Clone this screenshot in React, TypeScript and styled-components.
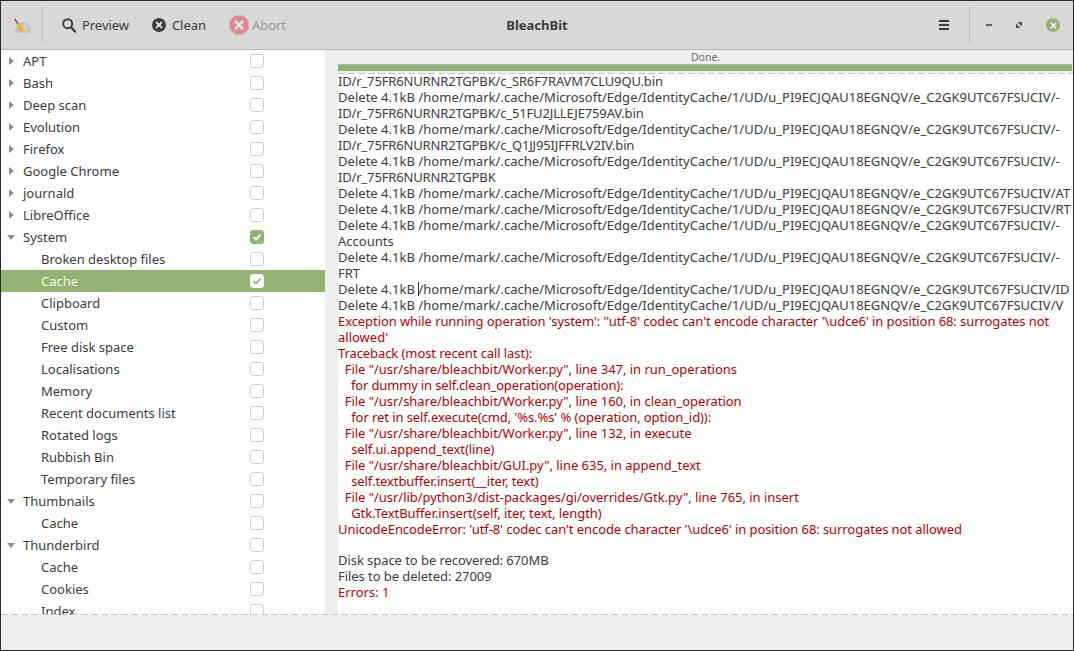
import React from "react";
import styled, { createGlobalStyle, css } from "styled-components";
import { X } from "lucide-react";

const GlobalStyle = createGlobalStyle`
  html, body {
    margin: 0;
    padding: 0;
    background: #efefef;
  }
  body {
    font-family: "Noto Sans", "Open Sans", sans-serif;
    font-size: 13px;
    color: #3c3c3c;
  }
`;

type TreeRow = {
  label: string;
  level: 0 | 1;
  arrow?: "right" | "down";
  checked?: boolean;
  selected?: boolean;
};

const treeRows: TreeRow[] = [
  { label: "APT", level: 0, arrow: "right" },
  { label: "Bash", level: 0, arrow: "right" },
  { label: "Deep scan", level: 0, arrow: "right" },
  { label: "Evolution", level: 0, arrow: "right" },
  { label: "Firefox", level: 0, arrow: "right" },
  { label: "Google Chrome", level: 0, arrow: "right" },
  { label: "journald", level: 0, arrow: "right" },
  { label: "LibreOffice", level: 0, arrow: "right" },
  { label: "System", level: 0, arrow: "down", checked: true },
  { label: "Broken desktop files", level: 1 },
  { label: "Cache", level: 1, checked: true, selected: true },
  { label: "Clipboard", level: 1 },
  { label: "Custom", level: 1 },
  { label: "Free disk space", level: 1 },
  { label: "Localisations", level: 1 },
  { label: "Memory", level: 1 },
  { label: "Recent documents list", level: 1 },
  { label: "Rotated logs", level: 1 },
  { label: "Rubbish Bin", level: 1 },
  { label: "Temporary files", level: 1 },
  { label: "Thumbnails", level: 0, arrow: "down" },
  { label: "Cache", level: 1 },
  { label: "Thunderbird", level: 0, arrow: "down" },
  { label: "Cache", level: 1 },
  { label: "Cookies", level: 1 },
  { label: "Index", level: 1 },
];

const edge = "Delete 4.1kB /home/mark/.cache/Microsoft/Edge/IdentityCache/1/UD/u_PI9ECJQAU18EGNQV/e_C2GK9UTC67FSUCIV/";

type LogEntry = { text: string; error?: boolean; caret?: boolean; track?: number };

const logLines: LogEntry[] = [
  { text: "ID/r_75FR6NURNR2TGPBK/c_SR6F7RAVM7CLU9QU.bin", track: -0.15 },
  { text: edge + "-", track: 0.03 },
  { text: "ID/r_75FR6NURNR2TGPBK/c_51FU2JLLEJE759AV.bin", track: -0.15 },
  { text: edge + "-", track: 0.03 },
  { text: "ID/r_75FR6NURNR2TGPBK/c_Q1JJ95IJFFRLV2IV.bin", track: -0.15 },
  { text: edge + "-", track: 0.03 },
  { text: "ID/r_75FR6NURNR2TGPBK", track: -0.15 },
  { text: edge + "AT", track: 0.03 },
  { text: edge + "RT", track: 0.03 },
  { text: edge + "-", track: 0.03 },
  { text: "Accounts" },
  { text: edge + "-", track: 0.03 },
  { text: "FRT" },
  { text: edge + "ID", caret: true, track: 0.03 },
  { text: edge + "V", track: 0.03 },
  { text: "Exception while running operation 'system': ''utf-8' codec can't encode character '\\udce6' in position 68: surrogates not", error: true, track: -0.08 },
  { text: "allowed'", error: true },
  { text: "Traceback (most recent call last):", error: true, track: -0.09 },
  { text: '  File "/usr/share/bleachbit/Worker.py", line 347, in run_operations', error: true, track: -0.03 },
  { text: "    for dummy in self.clean_operation(operation):", error: true, track: -0.15 },
  { text: '  File "/usr/share/bleachbit/Worker.py", line 160, in clean_operation', error: true, track: -0.03 },
  { text: "    for ret in self.execute(cmd, '%s.%s' % (operation, option_id)):", error: true, track: -0.08 },
  { text: '  File "/usr/share/bleachbit/Worker.py", line 132, in execute', error: true, track: -0.03 },
  { text: "    self.ui.append_text(line)", error: true, track: -0.08 },
  { text: '  File "/usr/share/bleachbit/GUI.py", line 635, in append_text', error: true, track: -0.03 },
  { text: "    self.textbuffer.insert(__iter, text)", error: true, track: -0.08 },
  { text: '  File "/usr/lib/python3/dist-packages/gi/overrides/Gtk.py", line 765, in insert', error: true, track: -0.03 },
  { text: "    Gtk.TextBuffer.insert(self, iter, text, length)", error: true, track: -0.08 },
  { text: "UnicodeEncodeError: 'utf-8' codec can't encode character '\\udce6' in position 68: surrogates not allowed", error: true, track: -0.08 },
];

const summaryLines: LogEntry[] = [
  { text: "Disk space to be recovered: 670MB", track: -0.06 },
  { text: "Files to be deleted: 27009", track: -0.06 },
  { text: "Errors: 1", error: true },
];

const BroomIcon = () => (
  <svg width="17" height="15" viewBox="0 0 17 15">
    <path d="M1 14 L6 5 H12 L16 10 V14 Z" fill="#cfccc2" stroke="#aeaba1" strokeWidth="0.7" />
    <path d="M0 1.2 L1.4 0.4 L5 6 L3.6 7 Z" fill="#b5533c" />
    <path d="M3 7 L7 5 L11 12 L7 14 L4 11 Z" fill="#e8c24a" />
    <path d="M5.5 8 L8 13 M4.5 9.5 L6 12.5" stroke="#b8912c" strokeWidth="0.6" fill="none" />
  </svg>
);

const SearchIcon = () => (
  <svg width="14" height="15" viewBox="0 0 14 15">
    <circle cx="5.7" cy="5.7" r="4.5" fill="none" stroke="#3c3c3c" strokeWidth="1.9" />
    <path d="M9 9.2 L13 13.6" stroke="#3c3c3c" strokeWidth="2.3" strokeLinecap="round" />
  </svg>
);

const CleanIcon = () => (
  <svg width="14" height="14" viewBox="0 0 14 14">
    <circle cx="7" cy="7" r="7" fill="#3c3c3c" />
    <path d="M4.6 4.6 L9.4 9.4 M9.4 4.6 L4.6 9.4" stroke="#e4e4e4" strokeWidth="2" strokeLinecap="round" />
  </svg>
);

const AbortIcon = () => (
  <svg width="20" height="20" viewBox="0 0 21 21">
    <path d="M6.3 0.5 H14.7 L20.5 6.3 V14.7 L14.7 20.5 H6.3 L0.5 14.7 V6.3 Z" fill="#dc8c8c" />
    <path d="M7 7 L14 14 M14 7 L7 14" stroke="#f7e9e9" strokeWidth="2.6" strokeLinecap="round" />
  </svg>
);

const MaximizeIcon = () => (
  <svg width="6" height="6" viewBox="0 0 6 6">
    <path d="M0 1.6 V6 H4.4 Z M1.6 0 H6 V4.4 Z" fill="#4c4c4c" />
  </svg>
);

const Tick = ({ color }: { color: string }) => (
  <svg width="10" height="10" viewBox="0 0 10 10">
    <path d="M1.5 5.2 L4 7.6 L8.5 2.6" fill="none" stroke={color} strokeWidth="1.7" />
  </svg>
);

export default function App() {
  return (
    <Window>
      <GlobalStyle />
      <HeaderBar>
        <AppIconSlot>
          <BroomIcon />
        </AppIconSlot>
        <ToolButtons>
          <ToolButton>
            <SearchIcon />
            Preview
          </ToolButton>
          <ToolButton>
            <CleanIcon />
            Clean
          </ToolButton>
          <ToolButton $disabled $gap={3}>
            <AbortIcon />
            Abort
          </ToolButton>
        </ToolButtons>
        <Title>BleachBit</Title>
        <Burger>
          <span />
          <span />
          <span />
        </Burger>
        <WindowControls>
          <MinimizeMark />
          <MaximizeIcon />
          <CloseCircle>
            <X size={9} strokeWidth={4} color="#ffffff" />
          </CloseCircle>
        </WindowControls>
      </HeaderBar>
      <Body>
        <TreePane>
          {treeRows.map((row, i) => (
            <Row key={i} $selected={row.selected}>
              <ArrowSlot>
                {row.arrow === "right" && <ArrowRight />}
                {row.arrow === "down" && <ArrowDown />}
              </ArrowSlot>
              <RowLabel $level={row.level}>{row.label}</RowLabel>
              <CheckBox $checked={row.checked} $selected={row.selected}>
                {row.checked && <Tick color={row.selected ? "#92b372" : "#ffffff"} />}
              </CheckBox>
            </Row>
          ))}
        </TreePane>
        <RightPane>
          <ProgressArea>
            <ProgressText>Done.</ProgressText>
            <ProgressBar />
          </ProgressArea>
          <LogView>
            {logLines.map((line, i) => (
              <LogLine key={i} $error={line.error} $track={line.track}>
                {line.caret ? (
                  <>
                    {line.text.slice(0, 13)}
                    <Caret />
                    {line.text.slice(13)}
                  </>
                ) : (
                  line.text
                )}
              </LogLine>
            ))}
            <Spacer />
            {summaryLines.map((line) => (
              <LogLine key={line.text} $error={line.error} $track={line.track}>
                {line.text}
              </LogLine>
            ))}
          </LogView>
        </RightPane>
      </Body>
      <StatusBar />
    </Window>
  );
}

const dashes = css`
  content: "";
  position: absolute;
  left: 0;
  right: 0;
  height: 1px;
  background: repeating-linear-gradient(90deg, #c8c8c8 0 7px, transparent 7px 10px);
`;

const Window = styled.div`
  box-sizing: border-box;
  width: 1074px;
  height: 651px;
  display: flex;
  flex-direction: column;
  overflow: hidden;
  background: #efefef;
  border: 1px solid #2a2a2a;
`;

const HeaderBar = styled.header`
  position: relative;
  flex: 0 0 49px;
  display: flex;
  align-items: center;
  background: #d8d8d8;
  border-bottom: 1px solid #b4b4b4;
  box-sizing: border-box;
  height: 49px;
`;

const AppIconSlot = styled.div`
  width: 42px;
  height: 36px;
  box-sizing: border-box;
  padding-left: 13px;
  display: flex;
  align-items: center;
  border-right: 1px solid #bdbdbd;
`;

const ToolButtons = styled.div`
  display: flex;
  align-items: center;
  margin-left: 19px;
  gap: 23px;
`;

const ToolButton = styled.div<{ $disabled?: boolean; $gap?: number }>`
  display: flex;
  align-items: center;
  gap: ${(p) => p.$gap ?? 6}px;
  font-size: 13px;
  letter-spacing: -0.05px;
  color: ${(p) => (p.$disabled ? "#9a9a9a" : "#3c3c3c")};
`;

const Title = styled.div`
  position: absolute;
  left: 0;
  right: 0;
  top: 15px;
  text-align: center;
  font-size: 13px;
  font-weight: 700;
  color: #3c3c3c;
  pointer-events: none;
`;

const Burger = styled.div`
  margin-left: auto;
  width: 10px;
  display: flex;
  flex-direction: column;
  gap: 2px;

  span {
    display: block;
    height: 2px;
    background: #3c3c3c;
  }
`;

const WindowControls = styled.div`
  height: 36px;
  margin-left: 20px;
  width: 104px;
  box-sizing: border-box;
  border-left: 1px solid #bdbdbd;
  padding: 0 13px 0 16px;
  display: flex;
  align-items: center;
  justify-content: space-between;
`;

const MinimizeMark = styled.div`
  width: 6px;
  height: 2px;
  background: #5c5c5c;
`;

const CloseCircle = styled.div`
  width: 14px;
  height: 14px;
  border-radius: 50%;
  background: #92b372;
  display: flex;
  align-items: center;
  justify-content: center;
`;

const Body = styled.main`
  position: relative;
  flex: 0 0 565px;
  display: flex;
  overflow: hidden;

  &::after {
    ${dashes}
    bottom: 0;
  }
`;

const TreePane = styled.div`
  flex: 0 0 324px;
  background: #ffffff;
  overflow: hidden;
`;

const Row = styled.div<{ $selected?: boolean }>`
  height: 22px;
  display: flex;
  align-items: center;
  background: ${(p) => (p.$selected ? "#92b372" : "transparent")};
  color: ${(p) => (p.$selected ? "#f4f8ef" : "#3c3c3c")};
`;

const ArrowSlot = styled.div`
  width: 22px;
  height: 22px;
  display: flex;
  align-items: center;
  padding-left: 6px;
  box-sizing: border-box;
`;

const ArrowRight = styled.div`
  width: 0;
  height: 0;
  margin-left: 2px;
  border-left: 5px solid #8f8f8f;
  border-top: 4px solid transparent;
  border-bottom: 4px solid transparent;
`;

const ArrowDown = styled.div`
  width: 0;
  height: 0;
  border-top: 5px solid #8f8f8f;
  border-left: 4.5px solid transparent;
  border-right: 4.5px solid transparent;
`;

const RowLabel = styled.span<{ $level: number }>`
  flex: 1;
  padding-left: ${(p) => p.$level * 18}px;
  white-space: nowrap;
`;

const CheckBox = styled.div<{ $checked?: boolean; $selected?: boolean }>`
  box-sizing: border-box;
  width: 14px;
  height: 14px;
  margin-right: 61px;
  border-radius: 3px;
  display: flex;
  align-items: center;
  justify-content: center;
  background: ${(p) => (p.$selected ? "#ffffff" : p.$checked ? "#92b372" : "#ffffff")};
  border: 1px solid ${(p) => (p.$selected ? "#ffffff" : p.$checked ? "#92b372" : "#cfcfcf")};
`;

const RightPane = styled.div`
  flex: 1;
  min-width: 0;
  display: flex;
  flex-direction: column;
  margin-left: 13px;
`;

const ProgressArea = styled.div`
  flex: 0 0 23px;
  display: flex;
  flex-direction: column;
  justify-content: flex-end;
`;

const ProgressText = styled.div`
  text-align: center;
  font-size: 10.5px;
  line-height: 14px;
  color: #6a6a6a;
`;

const ProgressBar = styled.div`
  height: 7px;
  margin-bottom: 2px;
  margin-right: 1px;
  background: #92b372;
  border-top: 1px solid #b0b0b0;
  box-sizing: border-box;
`;

const LogView = styled.div`
  position: relative;
  flex: 1;
  padding-top: 1px;
  background: #ffffff;
  overflow: hidden;

  &::before {
    ${dashes}
    top: 0;
  }
`;

const LogLine = styled.div<{ $error?: boolean; $track?: number }>`
  height: 16px;
  line-height: 15px;
  font-size: 13px;
  white-space: pre;
  letter-spacing: ${(p) => p.$track ?? 0}px;
  color: ${(p) => (p.$error ? "#c00000" : "#3c3c3c")};
`;

const Caret = styled.span`
  display: inline-block;
  width: 1px;
  height: 14px;
  margin-right: -1px;
  vertical-align: -2px;
  background: #3c3c3c;
`;

const Spacer = styled.div`
  height: 15px;
`;

const StatusBar = styled.footer`
  flex: 1;
  background: #efefef;
`;
